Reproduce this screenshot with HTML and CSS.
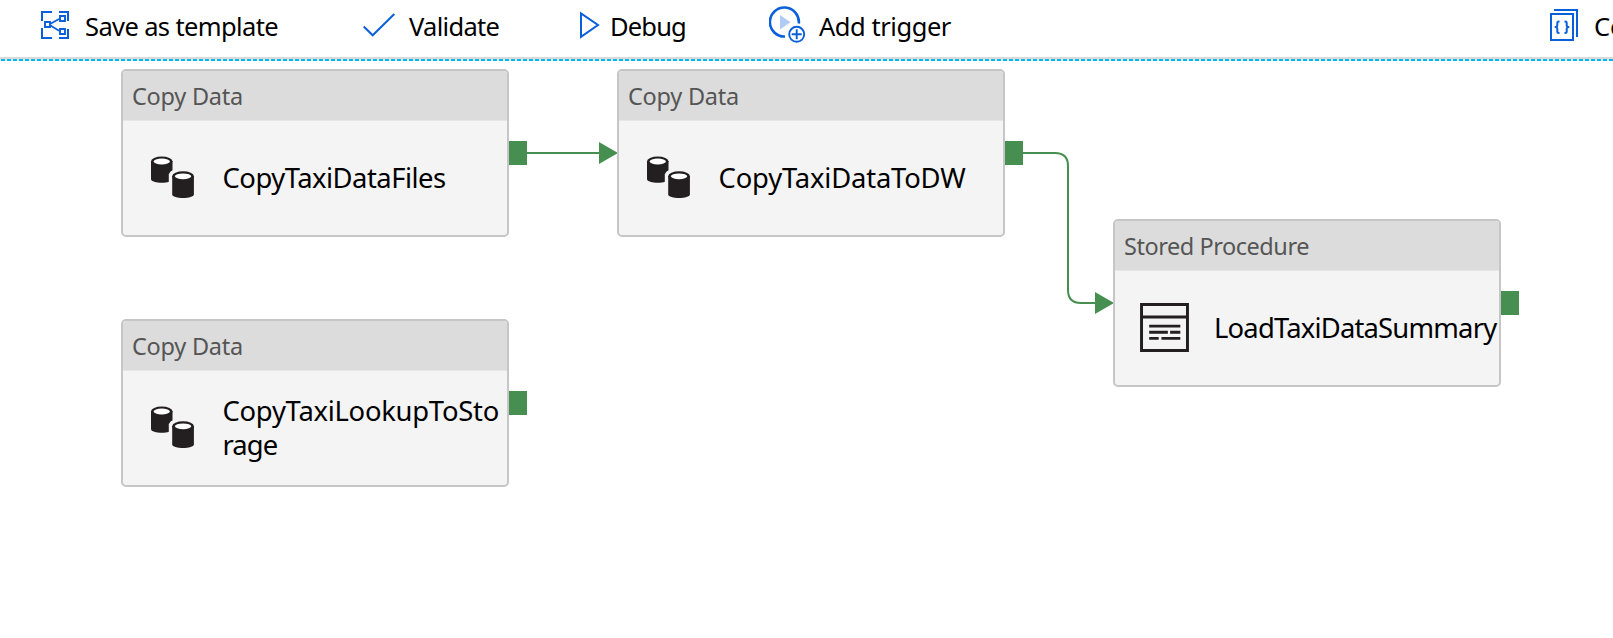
FILE: index.html
```html
<!DOCTYPE html>
<html lang="en">
<head>
<meta charset="utf-8">
<title>Pipeline</title>
<link rel="stylesheet" href="styles.css">
</head>
<body>
<header class="toolbar">
  <button class="tool">
    <svg class="icon-template" width="28" height="28" viewBox="0 0 28 28" fill="none" stroke="#0a5fdb" stroke-width="2">
      <path d="M1 10V1h10M18 1h9v9M27 18v9h-9M11 27H1V17"/>
      <path d="M4 11h5v5H4zM19 5h5v5h-5zM19 18h5v5h-5z" stroke-width="1.900"/>
      <path d="M9.500 12.800L18 8M9.500 14.500l8.500 5.200" stroke-width="1.700"/>
    </svg>
    <span class="label label-save">Save as template</span>
  </button>
  <button class="tool">
    <svg class="icon-check" width="32" height="24" viewBox="0 0 32 24" fill="none" stroke="#0a5fdb" stroke-width="2"><path d="M.7 13.500L9.700 22.300L31.300 1"/></svg>
    <span class="label label-validate">Validate</span>
  </button>
  <button class="tool">
    <svg class="icon-play" width="20" height="28" viewBox="0 0 20 28" fill="none" stroke="#0a5fdb" stroke-width="2"><path d="M1 2.500V25.800L18 14Z"/></svg>
    <span class="label label-debug">Debug</span>
  </button>
  <button class="tool">
    <svg class="icon-trigger" width="37" height="37" viewBox="0 0 37 37" fill="none" stroke="#0a5fdb">
      <path d="M16 30.500A14.500 14.500 0 1 1 29.800 17.500" stroke-width="2.600"/>
      <path d="M11 9v14.500l10.500-7.200z" fill="#b0cbf4" stroke="none"/>
      <circle cx="27.700" cy="28.300" r="7.500" stroke-width="1.900"/>
      <path d="M27.700 23.300v10M22.700 28.300h10" stroke-width="1.900"/>
    </svg>
    <span class="label label-trigger">Add trigger</span>
  </button>
  <button class="tool">
    <svg class="icon-code" width="29" height="33" viewBox="0 0 29 33" fill="none" stroke="#0a5fdb">
      <path d="M4 1H27V28" stroke-width="2"/>
      <path d="M1 5H23v26H1z" stroke-width="2"/>
      <path d="M9.500 12.500H9Q7.300 12.500 7.300 14V16.500Q7.300 18 4.700 18Q7.300 18 7.300 19.500V22.500Q7.300 24 9 24H9.500M14.500 12.500h.5Q16.700 12.500 16.700 14V16.500Q16.700 18 19.300 18Q16.700 18 16.700 19.500V22.500Q16.700 24 15 24h-.5" stroke-width="2"/>
    </svg>
    <span class="label">Code</span>
  </button>
</header>

<main class="canvas">
  <svg class="links" width="1613" height="638" viewBox="0 0 1613 638" fill="none" stroke="#468f51" stroke-width="2">
    <path d="M527 153H600"/>
    <path d="M1023 153H1055Q1068 153 1068 166V290Q1068 303 1081 303H1096"/>
    <path d="M599 142L618 153L599 164ZM1095 292L1114 303L1095 314Z" fill="#468f51" stroke="none"/>
  </svg>

  <section class="node node-files">
    <h2 class="node-type">Copy Data</h2>
    <div class="node-body">
      <svg class="icon-copy" width="44" height="44" viewBox="0 0 44 44">
        <path d="M0 5v18c0 5 21.500 5 21.500 0V5z" fill="#231f20"/>
        <ellipse cx="10.750" cy="5.500" rx="10.750" ry="5" fill="#231f20"/>
        <ellipse cx="10.750" cy="5.500" rx="8.200" ry="2.900" fill="#fff"/>
        <path d="M17.800 44V18.500C19 14.500 23 13.200 28 13.200V30z" fill="#f4f4f4"/>
        <path d="M21.200 20v18.300c0 5 21.700 5 21.700 0V20z" fill="#231f20"/>
        <ellipse cx="32.050" cy="20.300" rx="10.850" ry="5" fill="#231f20"/>
        <ellipse cx="32.050" cy="20.300" rx="8.200" ry="2.900" fill="#fff"/>
      </svg>
      <p class="node-name name-files">CopyTaxiDataFiles</p>
    </div>
    <span class="port"></span>
  </section>

  <section class="node node-dw">
    <h2 class="node-type">Copy Data</h2>
    <div class="node-body">
      <svg class="icon-copy" width="44" height="44" viewBox="0 0 44 44">
        <path d="M0 5v18c0 5 21.500 5 21.500 0V5z" fill="#231f20"/>
        <ellipse cx="10.750" cy="5.500" rx="10.750" ry="5" fill="#231f20"/>
        <ellipse cx="10.750" cy="5.500" rx="8.200" ry="2.900" fill="#fff"/>
        <path d="M17.800 44V18.500C19 14.500 23 13.200 28 13.200V30z" fill="#f4f4f4"/>
        <path d="M21.200 20v18.300c0 5 21.700 5 21.700 0V20z" fill="#231f20"/>
        <ellipse cx="32.050" cy="20.300" rx="10.850" ry="5" fill="#231f20"/>
        <ellipse cx="32.050" cy="20.300" rx="8.200" ry="2.900" fill="#fff"/>
      </svg>
      <p class="node-name name-dw">CopyTaxiDataToDW</p>
    </div>
    <span class="port"></span>
  </section>

  <section class="node node-summary">
    <h2 class="node-type type-procedure">Stored Procedure</h2>
    <div class="node-body">
      <svg class="icon-procedure" width="49" height="49" viewBox="0 0 48 48" fill="none" stroke="#231f20">
        <path d="M1.500 1.500h45v45h-45zM1.500 13.800h45" stroke-width="2.900"/>
        <path d="M9 22.700h30.500M9 28.700h18.300M29.500 28.700h10M9 34.700h9.300M21 34.700h18.500" stroke-width="2.800"/>
      </svg>
      <p class="node-name name-summary">LoadTaxiDataSummary</p>
    </div>
    <span class="port"></span>
  </section>

  <section class="node node-lookup">
    <h2 class="node-type">Copy Data</h2>
    <div class="node-body">
      <svg class="icon-copy" width="44" height="44" viewBox="0 0 44 44">
        <path d="M0 5v18c0 5 21.500 5 21.500 0V5z" fill="#231f20"/>
        <ellipse cx="10.750" cy="5.500" rx="10.750" ry="5" fill="#231f20"/>
        <ellipse cx="10.750" cy="5.500" rx="8.200" ry="2.900" fill="#fff"/>
        <path d="M17.800 44V18.500C19 14.500 23 13.200 28 13.200V30z" fill="#f4f4f4"/>
        <path d="M21.200 20v18.300c0 5 21.700 5 21.700 0V20z" fill="#231f20"/>
        <ellipse cx="32.050" cy="20.300" rx="10.850" ry="5" fill="#231f20"/>
        <ellipse cx="32.050" cy="20.300" rx="8.200" ry="2.900" fill="#fff"/>
      </svg>
      <p class="node-name name-lookup">CopyTaxiLookupToSto<br><span class="name-rest">rage</span></p>
    </div>
    <span class="port"></span>
  </section>
</main>
</body>
</html>
```
FILE: styles.css
```css
* { box-sizing: border-box; }
html, body { margin: 0; height: 638px; overflow: hidden; }
body {
  position: relative;
  background: #fff;
  color: #000;
  font-family: "Segoe UI", "Noto Sans", "Open Sans", sans-serif;
}
.toolbar {
  display: grid;
  grid-template-columns: 322px 217px 189px 781px 63px;
  height: 61px;
  padding: 0 0 4px 41px;
  overflow: hidden;
  background:
    linear-gradient(90deg, #00b7f1 4px, #eee9e7 4px) 1px 59px / 6px 2px repeat-x,
    linear-gradient(#dadada, #dadada) 0 57px / 100% 2px no-repeat;
}
.tool {
  display: flex;
  align-items: flex-start;
  padding: 0;
  border: 0;
  background: none;
  font: inherit;
  color: inherit;
  overflow: hidden;
}
.tool svg { flex: none; }
.label {
  margin-top: 8px;
  font-size: 25.5px;
  line-height: 36px;
  white-space: nowrap;
}
.icon-template { margin: 11px 16px 0 0; }
.icon-check { margin: 13px 14px 0 0; }
.icon-play { margin: 11px 10px 0 0; }
.icon-trigger { margin: 6px 13px 0 0; }
.icon-code { margin: 9px 15px 0 0; }
.label-save { letter-spacing: -.62px; }
.label-validate { letter-spacing: -.7px; }
.label-debug { letter-spacing: -.85px; }
.label-trigger { letter-spacing: -.45px; }

.links { position: absolute; left: 0; top: 0; }
.node {
  position: absolute;
  width: 388px;
  height: 168px;
  border: 2px solid #c6c6c6;
  border-radius: 5px;
  background: #f4f4f4;
}
.node-files { left: 121px; top: 69px; }
.node-dw { left: 617px; top: 69px; }
.node-summary { left: 1113px; top: 219px; }
.node-lookup { left: 121px; top: 319px; }
.node-type {
  height: 50px;
  margin: 0;
  padding-left: 9px;
  border-bottom: 1px solid #e6e6e6;
  border-radius: 3px 3px 0 0;
  background: #dcdcdc;
  color: #555;
  font-size: 23.5px;
  font-weight: 400;
  letter-spacing: -.25px;
  line-height: 51px;
}
.type-procedure { letter-spacing: -.46px; }
.node-body {
  display: flex;
  align-items: center;
  height: 114px;
  padding-left: 28px;
}
.node-body svg { flex: none; }
.icon-copy { margin: 0 28px 0 0; }
.icon-procedure { margin: -1px 25px 0 -3px; }
.node-name {
  margin: 0 0 0 -.5px;
  font-size: 27.4px;
  line-height: 34px;
  white-space: nowrap;
}
.name-files { letter-spacing: -.5px; }
.name-dw { letter-spacing: -.18px; }
.name-summary { margin-left: 0; letter-spacing: -.8px; }
.name-lookup { letter-spacing: -.26px; }
.name-rest { letter-spacing: -.9px; }
.port {
  position: absolute;
  left: 386px;
  top: 70px;
  width: 18px;
  height: 24px;
  background: #468f51;
}
```
